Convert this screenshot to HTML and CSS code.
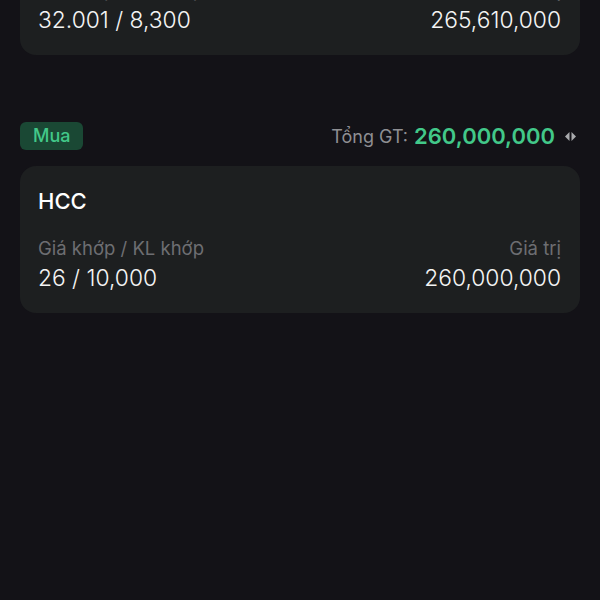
FILE: index.html
```html
<!DOCTYPE html>
<html lang="vi">
<head>
<meta charset="utf-8">
<link rel="stylesheet" href="styles.css">
</head>
<body>
<div class="page">
  <div class="card card-first">
    <div class="ticker">HPG</div>
    <div class="row labels">
      <span>Giá khớp / KL khớp</span>
      <span>Giá trị</span>
    </div>
    <div class="row values">
      <span>32.001 / 8,300</span>
      <span>265,610,000</span>
    </div>
  </div>

  <div class="section-head">
    <span class="badge">Mua</span>
    <div class="total">
      <span class="total-label">Tổng GT:</span>
      <span class="total-value">260,000,000</span>
      <svg class="arrows" width="13" height="11" viewBox="0 0 13 11">
        <path d="M5.5 1 L1 5.5 L5.5 10 Z" fill="#a9aaad"/>
        <path d="M7.5 1 L12 5.5 L7.5 10 Z" fill="#a9aaad"/>
      </svg>
    </div>
  </div>

  <div class="card">
    <div class="ticker">HCC</div>
    <div class="row labels">
      <span>Giá khớp / KL khớp</span>
      <span>Giá trị</span>
    </div>
    <div class="row values">
      <span>26 / 10,000</span>
      <span>260,000,000</span>
    </div>
  </div>
</div>
</body>
</html>
```

FILE: styles.css
```css
html, body {
  margin: 0;
  padding: 0;
  background: #131217;
  height: 100%;
  overflow: hidden;
}
.page {
  padding: 0 20px;
  font-family: Inter, "Noto Sans", sans-serif;
  color: #f2f2f2;
}
.card {
  background: #1d1f20;
  border-radius: 16px;
  padding: 20px 19px 20px 18px;
}
.card-first {
  margin-top: -92px;
}
.ticker {
  font-size: 22px;
  font-weight: 500;
  line-height: 30px;
  color: #ffffff;
}
.row {
  display: flex;
  justify-content: space-between;
}
.labels {
  margin-top: 19px;
  font-size: 18.5px;
  line-height: 26px;
  color: #6d6e72;
}
.values {
  margin-top: 2px;
  font-size: 22.8px;
  font-weight: 300;
  line-height: 30px;
  color: #f4f4f4;
}
.section-head {
  margin-top: 67px;
  margin-bottom: 16px;
  display: flex;
  justify-content: space-between;
  align-items: center;
  height: 28px;
}
.badge {
  background: #1a4834;
  color: #42c889;
  font-size: 18px;
  line-height: 28px;
  padding: 0 13px;
  border-radius: 6px;
  font-weight: 500;
}
.total {
  display: flex;
  align-items: center;
  gap: 6px;
}
.total-label {
  color: #8f8f93;
  font-size: 18px;
}
.total-value {
  color: #42c889;
  font-size: 22px;
  font-weight: 600;
}
.arrows {
  margin-left: 3px;
  margin-right: 3px;
}
```
